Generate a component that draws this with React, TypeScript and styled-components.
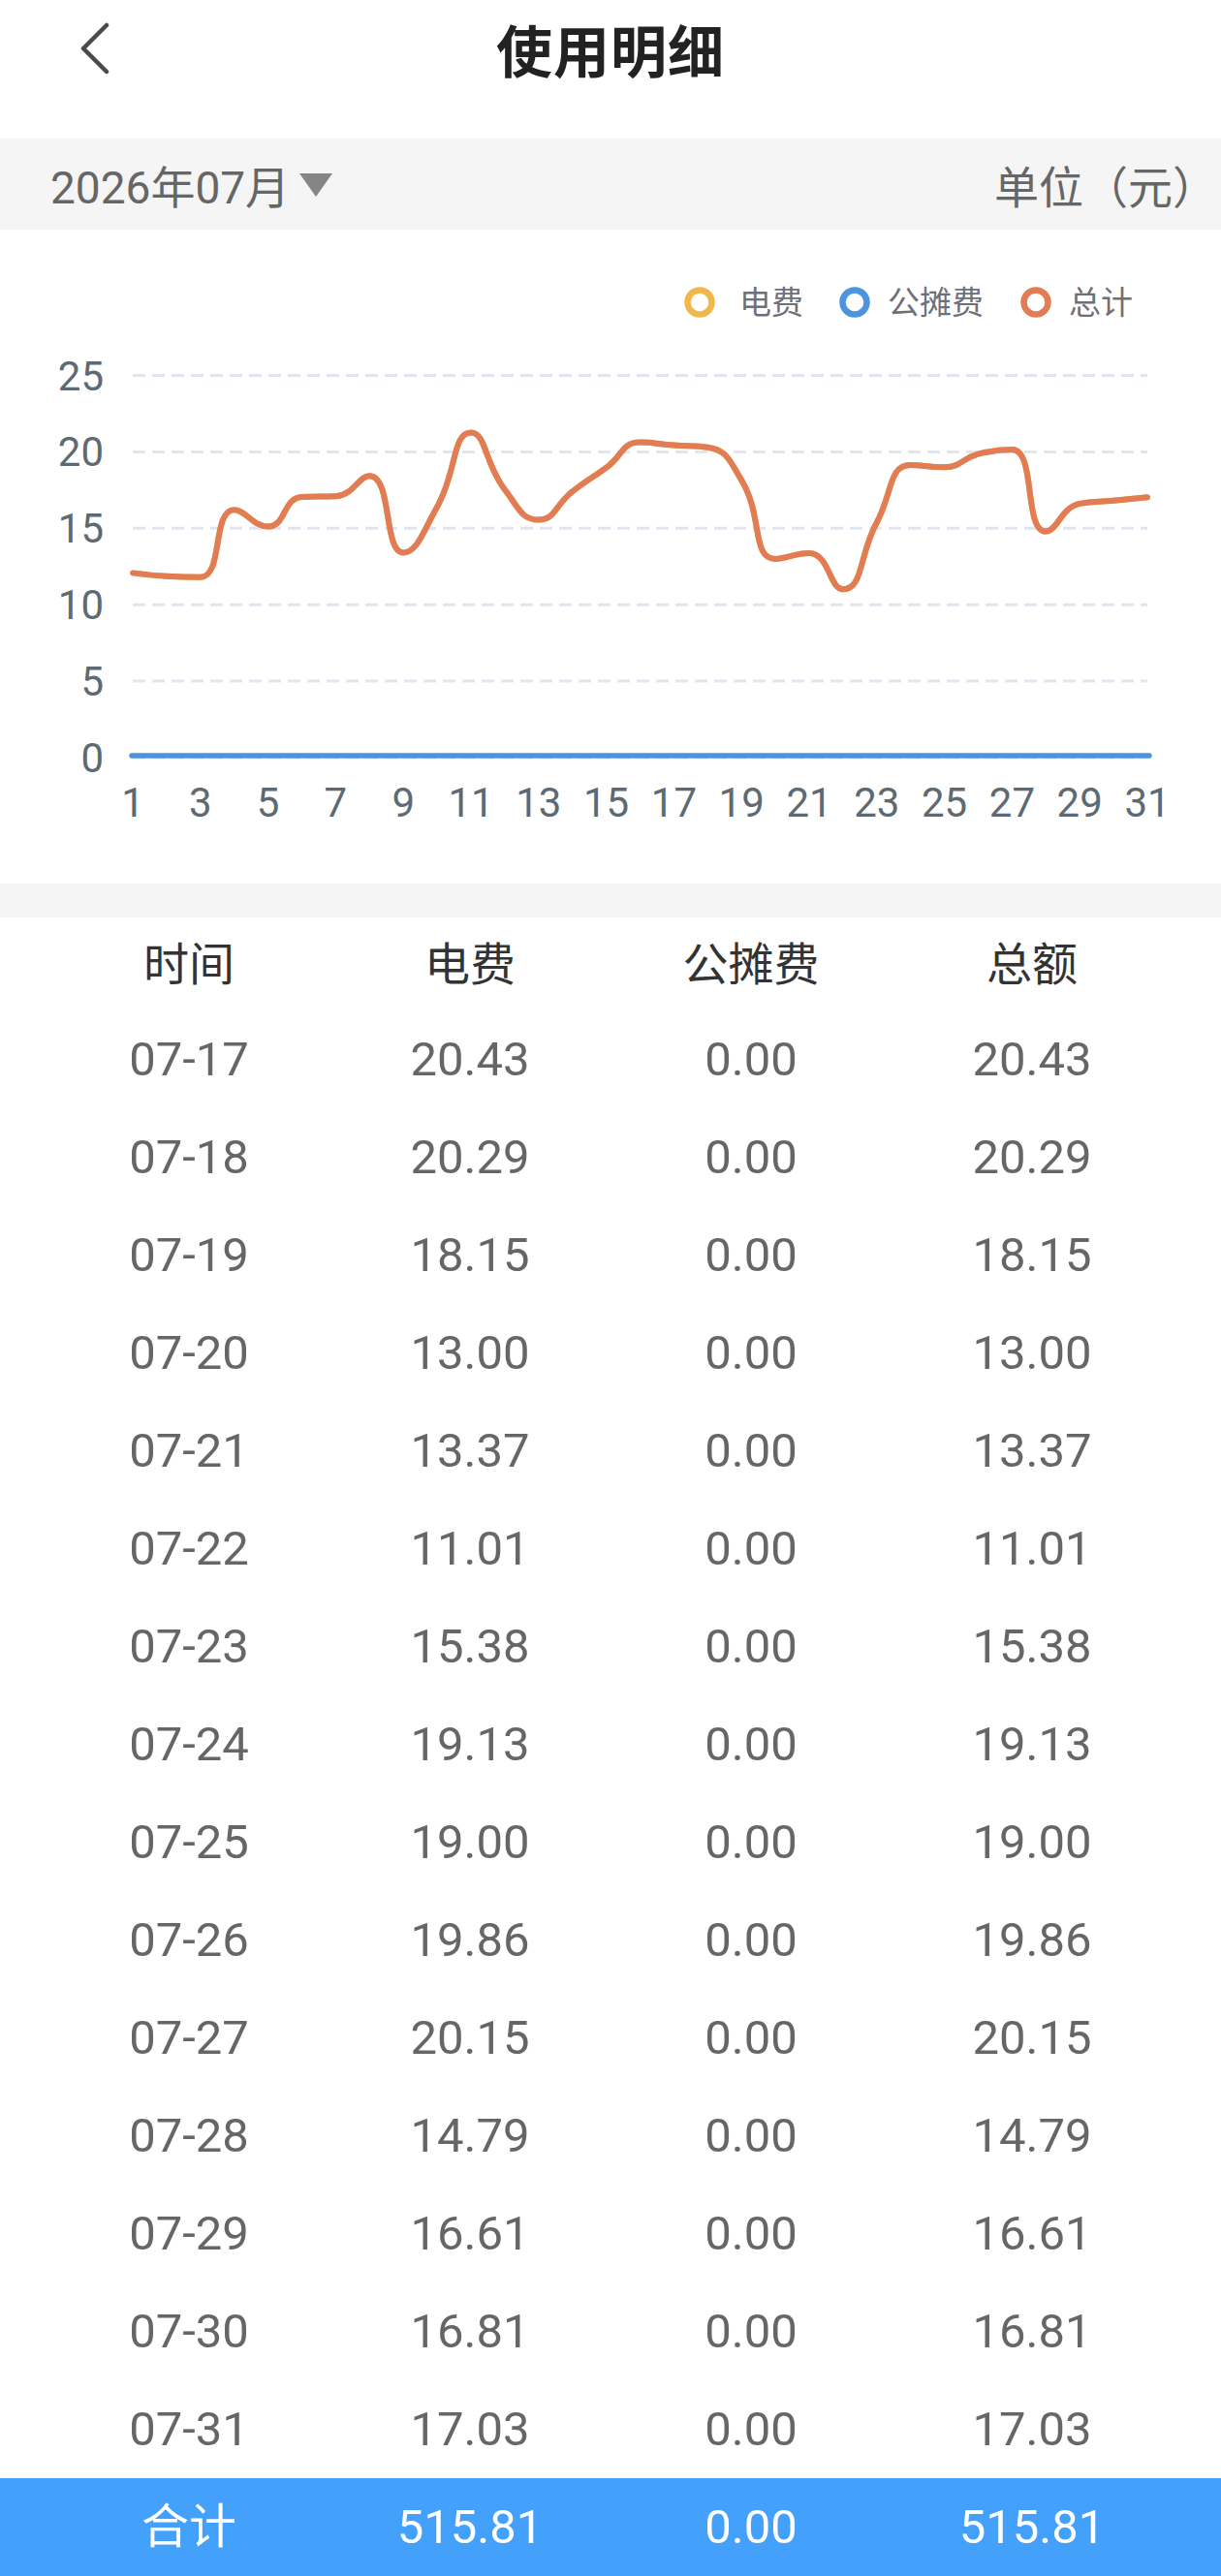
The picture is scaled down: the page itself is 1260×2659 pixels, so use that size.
import * as React from 'react';
import styled, { createGlobalStyle } from 'styled-components';

const GlobalStyle = createGlobalStyle`
  html, body {
    margin: 0;
    padding: 0;
    background: #ffffff;
  }
  body {
    font-family: Roboto, "Noto Sans CJK SC", "Noto Sans", sans-serif;
  }
`;

// daily totals for July; 17-31 are the rows shown below the chart
const daily = [
  12.08, 11.86, 11.8, 16.21, 15.12, 17.05, 17.1, 18.43, 13.41, 16.4, 21.27, 17.53, 15.55, 17.41, 18.96, 20.62,
  20.43, 20.29, 18.15, 13.0, 13.37, 11.01, 15.38, 19.13, 19.0, 19.86, 20.15, 14.79, 16.61, 16.81, 17.03,
];

const Page = styled.div`
  width: 1260px;
  min-height: 2659px;
  display: flex;
  flex-direction: column;
  background: #ffffff;
`;

const Header = styled.header`
  position: relative;
  height: 100px;
  margin-bottom: 43px;
  display: flex;
  align-items: center;
  justify-content: center;
`;

const BackButton = styled.button`
  position: absolute;
  left: 72px;
  top: 18px;
  width: 48px;
  height: 62px;
  padding: 0;
  border: none;
  background: transparent;
  display: flex;
  align-items: center;
  justify-content: center;
`;

const Title = styled.h1`
  margin: 0;
  font-size: 58px;
  font-weight: 700;
  color: #222222;
  letter-spacing: 1px;
`;

const FilterBar = styled.div`
  height: 94px;
  background: #f5f5f5;
  display: flex;
  align-items: center;
  justify-content: space-between;
  padding: 0 4px 0 52px;
  color: #666666;
  font-size: 46px;
`;

const MonthPicker = styled.div`
  display: flex;
  align-items: center;
  gap: 10px;
`;

const Caret = styled.span`
  width: 0;
  height: 0;
  border-left: 17px solid transparent;
  border-right: 17px solid transparent;
  border-top: 24px solid #858585;
  margin-top: 2px;
`;

const UnitLabel = styled.span`
  font-family: "Noto Sans CJK SC", sans-serif;
`;

const ChartCard = styled.section`
  height: 675px;
  background: #ffffff;
`;

const Spacer = styled.div`
  height: 35px;
  background: #f5f5f5;
`;

const Table = styled.div`
  display: flex;
  flex-direction: column;
`;

const Row = styled.div<{ $height: number; $head?: boolean; $total?: boolean }>`
  display: grid;
  grid-template-columns: repeat(4, 1fr);
  align-items: center;
  padding: 0 50px;
  height: ${(p) => p.$height}px;
  background: ${(p) => (p.$total ? '#43a1fb' : '#ffffff')};
  color: ${(p) => (p.$total ? '#ffffff' : p.$head ? '#333333' : '#666666')};
  font-size: ${(p) => (p.$head ? 47 : 49)}px;
`;

const Cell = styled.div`
  text-align: center;
  line-height: 1;
`;

const ChevronLeft: React.FC = () => (
  <svg width="36" height="56" viewBox="0 0 36 56">
    <polyline points="32,5 8,29 32,53" fill="none" stroke="#4a4a4a" strokeWidth="4.5" strokeLinecap="round" strokeLinejoin="round" />
  </svg>
);

type Pt = [number, number];

// smoothing close to the way echarts draws `smooth: true`
const smoothPath = (pts: Pt[], smooth = 0.5): string => {
  const n = pts.length;
  let d = `M${pts[0][0].toFixed(1)},${pts[0][1].toFixed(1)}`;
  let cp0: Pt = [pts[0][0], pts[0][1]];
  for (let i = 1; i < n; i++) {
    const [x, y] = pts[i];
    const [px, py] = pts[i - 1];
    let cp1: Pt;
    let nextCp0: Pt;
    if (i < n - 1) {
      const [nx, ny] = pts[i + 1];
      const lenPrev = Math.hypot(x - px, y - py);
      const lenNext = Math.hypot(nx - x, ny - y);
      const ratio = lenNext / (lenNext + lenPrev);
      let vx = nx - px;
      let vy = ny - py;
      let ncx = x + vx * smooth * ratio;
      let ncy = y + vy * smooth * ratio;
      ncx = Math.max(Math.min(ncx, Math.max(nx, x)), Math.min(nx, x));
      ncy = Math.max(Math.min(ncy, Math.max(ny, y)), Math.min(ny, y));
      vx = ncx - x;
      vy = ncy - y;
      let c1x = x - (vx * lenPrev) / lenNext;
      let c1y = y - (vy * lenPrev) / lenNext;
      c1x = Math.max(Math.min(c1x, Math.max(px, x)), Math.min(px, x));
      c1y = Math.max(Math.min(c1y, Math.max(py, y)), Math.min(py, y));
      vx = x - c1x;
      vy = y - c1y;
      ncx = x + (vx * lenNext) / lenPrev;
      ncy = y + (vy * lenNext) / lenPrev;
      cp1 = [c1x, c1y];
      nextCp0 = [ncx, ncy];
    } else {
      cp1 = [x, y];
      nextCp0 = [x, y];
    }
    d += ` C${cp0[0].toFixed(1)},${cp0[1].toFixed(1)} ${cp1[0].toFixed(1)},${cp1[1].toFixed(1)} ${x.toFixed(1)},${y.toFixed(1)}`;
    cp0 = nextCp0;
  }
  return d;
};

const PLOT_LEFT = 137;
const PLOT_RIGHT = 1184;
const ZERO_Y = 545;
const UNIT = 15.78;
const xOf = (i: number) => PLOT_LEFT + (i * (PLOT_RIGHT - PLOT_LEFT)) / 30;
const yOf = (v: number) => ZERO_Y - v * UNIT;

const legend = [
  { name: '电费', color: '#f1b74c', cx: 722, tx: 763 },
  { name: '公摊费', color: '#4d94e0', cx: 882, tx: 916 },
  { name: '总计', color: '#e27c55', cx: 1069, tx: 1103 },
];

const UsageChart: React.FC = () => {
  const totalPts: Pt[] = daily.map((v, i) => [xOf(i), yOf(v)]);
  const totalPath = smoothPath(totalPts);
  const ticks = [0, 5, 10, 15, 20, 25];
  const days = Array.from({ length: 16 }, (_, i) => i * 2 + 1);
  return (
    <svg width="1260" height="675" viewBox="0 0 1260 675" fontFamily='Roboto, "Noto Sans CJK SC", sans-serif'>
      {legend.map((l) => (
        <g key={l.name}>
          <circle cx={l.cx} cy={75} r={12.5} fill="#ffffff" stroke={l.color} strokeWidth={6.5} />
          <text x={l.tx} y={75} dominantBaseline="central" fontSize={33} fill="#6e7079">
            {l.name}
          </text>
        </g>
      ))}
      {ticks.map((t) => (
        <g key={t}>
          <line x1={PLOT_LEFT} x2={PLOT_RIGHT} y1={yOf(t)} y2={yOf(t)} stroke="#e0e6f1" strokeWidth={3} strokeDasharray="13 7" />
          <text x={107} y={yOf(t) + 15} textAnchor="end" fontSize={42} fill="#5e6a73">
            {t}
          </text>
        </g>
      ))}
      {days.map((d) => (
        <text key={d} x={xOf(d - 1)} y={606} textAnchor="middle" fontSize={42} fill="#5e6a73">
          {d}
        </text>
      ))}
      <line x1={PLOT_LEFT - 1} x2={PLOT_RIGHT + 2} y1={ZERO_Y - 2} y2={ZERO_Y - 2} stroke="#4d94e0" strokeWidth={5.5} strokeLinecap="round" />
      <path d={totalPath} fill="none" stroke="#f1b74c" strokeWidth={6} strokeLinejoin="round" />
      <path d={totalPath} fill="none" stroke="#e27c55" strokeWidth={6} strokeLinejoin="round" strokeLinecap="round" />
    </svg>
  );
};

const rows = daily.slice(16).map((v, i) => ({ date: `07-${String(17 + i).padStart(2, '0')}`, fee: v }));
const sum = daily.reduce((a, b) => a + b, 0);

const App: React.FC = () => (
  <Page>
    <GlobalStyle />
    <Header>
      <BackButton aria-label="返回">
        <ChevronLeft />
      </BackButton>
      <Title>使用明细</Title>
    </Header>
    <FilterBar>
      <MonthPicker>
        <span>2026年07月</span>
        <Caret />
      </MonthPicker>
      <UnitLabel>单位（元）</UnitLabel>
    </FilterBar>
    <ChartCard>
      <UsageChart />
    </ChartCard>
    <Spacer />
    <Table>
      <Row $height={96} $head>
        <Cell>时间</Cell>
        <Cell>电费</Cell>
        <Cell>公摊费</Cell>
        <Cell>总额</Cell>
      </Row>
      {rows.map((r) => (
        <Row key={r.date} $height={101}>
          <Cell>{r.date}</Cell>
          <Cell>{r.fee.toFixed(2)}</Cell>
          <Cell>0.00</Cell>
          <Cell>{r.fee.toFixed(2)}</Cell>
        </Row>
      ))}
      <Row $height={101} $total>
        <Cell>合计</Cell>
        <Cell>{sum.toFixed(2)}</Cell>
        <Cell>0.00</Cell>
        <Cell>{sum.toFixed(2)}</Cell>
      </Row>
    </Table>
  </Page>
);

export default App;
